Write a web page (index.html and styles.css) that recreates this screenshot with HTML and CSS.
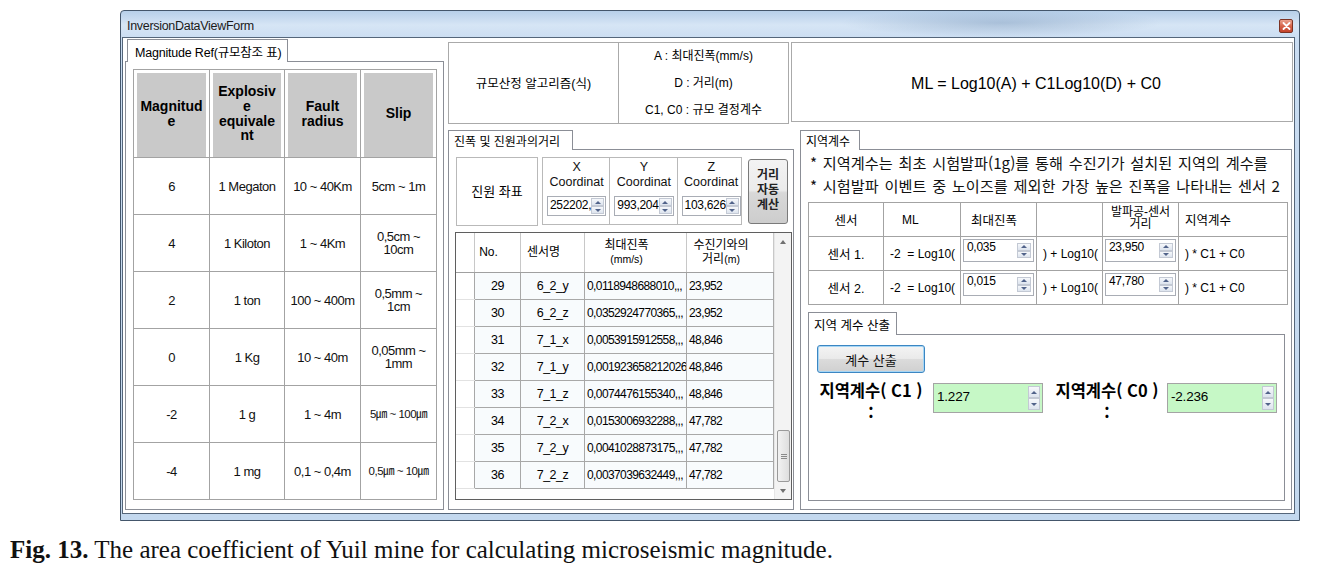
FILE: index.html
```html
<!DOCTYPE html>
<html lang="ko">
<head>
<meta charset="utf-8">
<title>InversionDataViewForm</title>
<link rel="stylesheet" href="styles.css">
</head>
<body>
<div class="window">
  <div class="titlebar">
    <span class="title">InversionDataViewForm</span>
    <span class="close"><svg width="9" height="8" viewBox="0 0 9 8"><path d="M1.5 1 L7.5 7 M7.5 1 L1.5 7" stroke="#fff" stroke-width="1.8" stroke-linecap="round"/></svg></span>
  </div>
  <div class="client">
    <section class="tabctl ref-ctl">
      <div class="tabstrip"><div class="tab">Magnitude Ref(규모참조 표)</div></div>
      <div class="tabpage ref-page">
        <table class="ref">
          <colgroup><col class="w76"><col class="w75"><col class="w76"><col class="w76"></colgroup>
          <thead>
            <tr><th>Magnitud<br>e</th><th>Explosiv<br>e<br>equivale<br>nt</th><th>Fault<br>radius</th><th>Slip</th></tr>
          </thead>
          <tbody>
            <tr><td>6</td><td>1 Megaton</td><td>10 ~ 40Km</td><td>5cm ~ 1m</td></tr>
            <tr><td>4</td><td>1 Kiloton</td><td>1 ~ 4Km</td><td>0,5cm ~<br>10cm</td></tr>
            <tr><td>2</td><td>1 ton</td><td>100 ~ 400m</td><td>0,5mm ~<br>1cm</td></tr>
            <tr><td>0</td><td>1 Kg</td><td>10 ~ 40m</td><td>0,05mm ~<br>1mm</td></tr>
            <tr><td>-2</td><td>1 g</td><td>1 ~ 4m</td><td class="mu">5㎛ ~ 100㎛</td></tr>
            <tr><td>-4</td><td>1 mg</td><td>0,1 ~ 0,4m</td><td class="mu">0,5㎛ ~ 10㎛</td></tr>
          </tbody>
        </table>
      </div>
    </section>

    <div class="main">
      <div class="top-row">
        <div class="algo">
          <div class="algo-name">규모산정 알고리즘(식)</div>
          <div class="algo-vars">
            <p>A : 최대진폭(mm/s)</p>
            <p>D : 거리(m)</p>
            <p>C1, C0 : 규모 결정계수</p>
          </div>
        </div>
        <div class="formula">ML = Log10(A) + C1Log10(D) + C0</div>
      </div>

      <div class="bottom-row">
        <section class="tabctl dist-ctl">
          <div class="tabstrip"><div class="tab">진폭 및 진원과의거리</div></div>
          <div class="tabpage dist-page">
            <div class="coords">
              <div class="origin">진원 좌표</div>
              <div class="xyz">
                <div class="axis">
                  <div class="axis-label">X<br>Coordinat</div>
                  <div class="spin"><span class="val">252202,</span><span class="btns"><i class="up"></i><i class="dn"></i></span></div>
                </div>
                <div class="axis">
                  <div class="axis-label">Y<br>Coordinat</div>
                  <div class="spin"><span class="val">993,204</span><span class="btns"><i class="up"></i><i class="dn"></i></span></div>
                </div>
                <div class="axis">
                  <div class="axis-label">Z<br>Coordinat</div>
                  <div class="spin"><span class="val">103,626</span><span class="btns"><i class="up"></i><i class="dn"></i></span></div>
                </div>
              </div>
              <button class="auto-btn">거리<br>자동<br>계산</button>
            </div>

            <div class="grid">
              <table class="dg">
                <colgroup><col class="g-rh"><col class="g-no"><col class="g-name"><col class="g-amp"><col class="g-dist"></colgroup>
                <thead>
                  <tr><th></th><th>No.</th><th>센서명</th><th>최대진폭<br><small>(mm/s)</small></th><th>수진기와의<br>거리<small>(m)</small></th></tr>
                </thead>
                <tbody>
                  <tr><td></td><td>29</td><td>6_2_y</td><td class="l">0,0118948688010,,,</td><td class="l">23,952</td></tr>
                  <tr><td></td><td>30</td><td>6_2_z</td><td class="l">0,0352924770365,,,</td><td class="l">23,952</td></tr>
                  <tr><td></td><td>31</td><td>7_1_x</td><td class="l">0,0053915912558,,,</td><td class="l">48,846</td></tr>
                  <tr><td></td><td>32</td><td>7_1_y</td><td class="l">0,001923658212026</td><td class="l">48,846</td></tr>
                  <tr><td></td><td>33</td><td>7_1_z</td><td class="l">0,0074476155340,,,</td><td class="l">48,846</td></tr>
                  <tr><td></td><td>34</td><td>7_2_x</td><td class="l">0,0153006932288,,,</td><td class="l">47,782</td></tr>
                  <tr><td></td><td>35</td><td>7_2_y</td><td class="l">0,0041028873175,,,</td><td class="l">47,782</td></tr>
                  <tr><td></td><td>36</td><td>7_2_z</td><td class="l">0,0037039632449,,,</td><td class="l">47,782</td></tr>
                </tbody>
              </table>
              <div class="vscroll">
                <span class="sarrow sup"></span>
                <span class="track"><span class="thumb"><i></i><i></i><i></i></span></span>
                <span class="sarrow sdn"></span>
              </div>
            </div>
          </div>
        </section>

        <section class="tabctl region-ctl">
          <div class="tabstrip"><div class="tab">지역계수</div></div>
          <div class="tabpage region-page">
            <p class="note">* 지역계수는 최초 시험발파(1g)를 통해 수진기가 설치된 지역의 계수를</p>
            <p class="note">* 시험발파 이벤트 중 노이즈를 제외한 가장 높은 진폭을 나타내는 센서 2</p>
            <table class="coef">
              <colgroup><col class="k1"><col class="k2"><col class="k3"><col class="k4"><col class="k5"><col class="k6"></colgroup>
              <thead>
                <tr><th>센서</th><th class="lft ml">ML</th><th class="lft amp">최대진폭</th><th></th><th class="two">발파공-센서<br>거리</th><th class="lft">지역계수</th></tr>
              </thead>
              <tbody>
                <tr>
                  <td class="ctr">센서 1.</td><td>-2&nbsp; = Log10(</td>
                  <td class="box"><div class="spin small"><span class="val">0,035</span><span class="btns"><i class="up"></i><i class="dn"></i></span></div></td>
                  <td>) + Log10(</td>
                  <td class="box"><div class="spin small"><span class="val">23,950</span><span class="btns"><i class="up"></i><i class="dn"></i></span></div></td>
                  <td>) * C1 + C0</td>
                </tr>
                <tr>
                  <td class="ctr">센서 2.</td><td>-2&nbsp; = Log10(</td>
                  <td class="box"><div class="spin small"><span class="val">0,015</span><span class="btns"><i class="up"></i><i class="dn"></i></span></div></td>
                  <td>) + Log10(</td>
                  <td class="box"><div class="spin small"><span class="val">47,780</span><span class="btns"><i class="up"></i><i class="dn"></i></span></div></td>
                  <td>) * C1 + C0</td>
                </tr>
              </tbody>
            </table>

            <section class="tabctl calc-ctl">
              <div class="tabstrip"><div class="tab">지역 계수 산출</div></div>
              <div class="tabpage calc-page">
                <button class="calc-btn">계수 산출</button>
                <div class="result-row">
                  <div class="res-label">지역계수( C1 )<br>:</div>
                  <div class="spin green"><span class="val">1.227</span><span class="btns"><i class="up"></i><i class="dn"></i></span></div>
                  <div class="res-label second">지역계수( C0 )<br>:</div>
                  <div class="spin green last"><span class="val">-2.236</span><span class="btns"><i class="up"></i><i class="dn"></i></span></div>
                </div>
              </div>
            </section>
          </div>
        </section>
      </div>
    </div>
  </div>
</div>
<p class="caption"><b>Fig. 13.</b> The area coefficient of Yuil mine for calculating microseismic magnitude.</p>
</body>
</html>
```

FILE: styles.css
```css
* { box-sizing: border-box; }
html, body { margin: 0; padding: 0; }
body {
  width: 1320px; height: 567px; overflow: hidden; background: #fff; color: #000;
  font-family: "Liberation Sans", "Noto Sans CJK KR", sans-serif;
  font-size: 12px;
}
p { margin: 0; }
table { border-collapse: collapse; table-layout: fixed; }
th, td { padding: 0; }

/* ---------- window frame ---------- */
.window {
  width: 1180px; height: 511px; margin: 10px 0 0 120px;
  border: 1px solid #44566b; border-radius: 4px 4px 0 0;
  background:
    radial-gradient(ellipse 160px 14px at 880px 12px, rgba(120,150,185,0.45), rgba(120,150,185,0) 100%),
    linear-gradient(180deg, #b7cfe9 0px, #d6e5f5 14px, #c9dcf1 30px, #c3d8ee 100%);
  padding: 0 4px 6px 1px;
  display: flex; flex-direction: column;
}
.titlebar { height: 26px; display: flex; align-items: center; padding: 3px 0 0 5px; }
.title { font-size: 12.5px; letter-spacing: -0.3px; color: #1b1b1b; }
.close {
  margin-left: auto; margin-right: 2px; width: 14px; height: 14px;
  border: 1px solid #7c3324; border-radius: 2px;
  background: linear-gradient(180deg, #eaa38f 0%, #d7654b 50%, #c4432b 100%);
  display: flex; align-items: center; justify-content: center;
}
.client {
  flex: 1; display: flex; background: #fff;
  border: 1px solid #55667a;
}

/* ---------- generic tab control ---------- */
.tabctl { display: flex; flex-direction: column; }
.tabstrip { display: flex; }
.tabstrip::after { content: ""; flex: 1; border-bottom: 1px solid #8b8e96; }
.tab {
  border: 1px solid #8b8e96; border-bottom: none; background: #fff;
  font-size: 12px; white-space: nowrap; display: flex; align-items: center; padding: 0 6px;
}
.tabpage { flex: 1; border: 1px solid #8b8e96; border-top: none; background: #fff; }

/* ---------- left: magnitude reference ---------- */
.ref-ctl { width: 319px; margin: 1px 0 0 2px; height: 471px; }
.ref-ctl .tabstrip::before { content: ""; width: 2px; border-bottom: 1px solid #8b8e96; }
.ref-ctl .tab { width: 161px; height: 23px; padding-left: 7px; font-size: 12.5px; letter-spacing: -0.2px; }
.ref-page { padding: 7px 0 0 7px; }
.ref { width: 303px; border: 1px solid #a3a3a3; }
.ref .w76 { width: 76px; }
.ref .w75 { width: 75px; }
.ref th {
  height: 88px; background: #c9c9c9; font-weight: bold; font-size: 14px; line-height: 14.6px;
  border: 1px solid #a3a3a3; text-align: center;
  box-shadow: inset 3px 3px 0 #fff, inset -3px 0 0 #fff;
}
.ref td {
  height: 57px; border: 1px solid #a3a3a3; text-align: center; font-size: 13px; line-height: 13px;
  letter-spacing: -0.5px; color: #111; white-space: nowrap;
}
.ref td.mu { letter-spacing: -0.5px; font-size: 11.5px; }

/* ---------- main (right of left column) ---------- */
.main { width: 846px; margin: 4px 0 0 4px; display: flex; flex-direction: column; }
.top-row { display: flex; height: 82px; }
.algo { width: 341px; display: flex; border: 1px solid #aaaaaa; }
.algo-name {
  width: 170px; border-right: 1px solid #aaaaaa; display: flex; align-items: center; justify-content: center;
  font-size: 12.5px; padding-bottom: 2px;
}
.algo-vars { flex: 1; text-align: center; font-size: 12px; line-height: 27px; }
.formula {
  width: 502px; height: 80px; margin-left: 2px; border: 1px solid #aaaaaa;
  display: flex; align-items: center; justify-content: center; font-size: 16px; padding: 3px 12px 0 0;
}
.bottom-row { display: flex; margin-top: 6px; height: 380px; }

/* ---------- distance tab ---------- */
.dist-ctl { width: 346px; }
.dist-ctl .tab { width: 125px; height: 20px; font-size: 12px; padding: 0 5px; }
.dist-page { padding: 7px 0 0 6px; }
.coords { display: flex; margin-left: 1px; height: 70px; }
.origin {
  width: 82px; height: 69px; border: 1px solid #b9b9b9; display: flex; align-items: center; justify-content: center;
  font-size: 13px; padding-bottom: 2px;
}
.xyz { width: 200px; height: 68px; margin-left: 4px; border: 1px solid #b9b9b9; display: flex; }
.axis { flex: 1; padding: 0 3px 0 4px; }
.axis + .axis { border-left: 1px solid #b9b9b9; }
.axis-label { text-align: center; font-size: 12.5px; line-height: 15px; padding-top: 2px; height: 38px; color: #111; }
.axis .spin { height: 20px; }

.spin { display: flex; border: 1px solid #a9adb5; background: #fff; }
.spin .val { flex: 1; font-size: 12px; letter-spacing: -0.3px; line-height: 17px; padding-left: 2px; white-space: nowrap; overflow: hidden; }
.spin .btns { width: 14px; display: flex; flex-direction: column; padding: 1px 1px 1px 0; }
.spin .btns i {
  flex: 1; border: 1px solid #c3c9d4; background: linear-gradient(180deg, #f6f8fb, #dde4ee);
  display: flex; align-items: center; justify-content: center;
}
.spin .btns i::after { content: ""; border-left: 3px solid transparent; border-right: 3px solid transparent; }
.spin .btns .up::after { border-bottom: 3px solid #51638a; }
.spin .btns .dn::after { border-top: 3px solid #51638a; }

.auto-btn {
  width: 40px; height: 65px; margin: 2px 0 0 6px; padding: 0 0 6px;
  border: 1px solid #7a7a7a; border-radius: 3px;
  background: linear-gradient(180deg, #f3f3f3 0%, #ebebeb 48%, #d8d8d8 52%, #cdcdcd 100%);
  font-family: "Noto Sans CJK KR", sans-serif; font-size: 12px; font-weight: bold; line-height: 15px; color: #222;
}

.grid {
  width: 337px; height: 268px; margin-top: 5px; display: flex; align-items: flex-start;
  border: 1px solid #5f5f5f; background: #fff;
}
.dg { width: 317px; }
.dg .g-rh { width: 18px; }
.dg .g-no { width: 46px; }
.dg .g-name { width: 64px; }
.dg .g-amp { width: 102px; }
.dg .g-dist { width: 87px; }
.dg th {
  height: 39px; font-weight: normal; font-size: 12px; line-height: 14px; text-align: center; padding-right: 18px;
  border-right: 1px solid #c8c8c8; border-bottom: 1px solid #a0a0a0; vertical-align: middle; background: #fff;
}
.dg th small { font-size: 10.5px; }
.dg th:first-child { padding: 0; }
.dg td {
  height: 27px; border: 1px solid #a8a8a8; text-align: center; font-size: 12.5px; letter-spacing: -0.5px;
  background: #f8fbfd; white-space: nowrap; overflow: hidden;
}
.dg td:first-child { border-color: #e2e2e2 #a8a8a8 #e2e2e2 transparent; background: #fff; }
.dg td.l { text-align: left; padding-left: 2px; font-size: 12px; letter-spacing: -0.6px; }
.vscroll { width: 18px; align-self: stretch; display: flex; flex-direction: column; background: #f3f3f3; border-left: 1px solid #e6e6e6; }
.sarrow { height: 17px; display: flex; align-items: center; justify-content: center; }
.sarrow::after { content: ""; border-left: 3px solid transparent; border-right: 3px solid transparent; }
.sup::after { border-bottom: 4px solid #707070; }
.sdn::after { border-top: 4px solid #707070; }
.track { flex: 1; display: flex; flex-direction: column; }
.thumb {
  margin: auto 1px 0 2px; height: 52px; border: 1px solid #9a9a9a; border-radius: 2px;
  background: linear-gradient(90deg, #f2f2f2, #dedede);
  display: flex; flex-direction: column; align-items: center; justify-content: center; gap: 1px;
}
.thumb i { width: 6px; height: 1px; background: #8a8a8a; }

/* ---------- region coefficient tab ---------- */
.region-ctl { width: 492px; margin-left: 6px; }
.region-ctl .tab { width: 60px; height: 20px; font-size: 12px; padding: 0 5px; }
.region-page { padding: 1px 0 0 7px; overflow: hidden; }
.note {
  font-family: "Noto Sans CJK KR", sans-serif; font-size: 15.2px; line-height: 23px; word-spacing: 1.5px;
  white-space: nowrap; width: 482px; overflow: hidden; padding-left: 2px; color: #111;
}
.coef { width: 479px; margin-top: 5px; border: 1px solid #a3a3a3; }
.coef .k1 { width: 75px; }
.coef .k2 { width: 77px; }
.coef .k3 { width: 76px; }
.coef .k4 { width: 66px; }
.coef .k5 { width: 76px; }
.coef .k6 { width: 109px; }
.coef th {
  height: 34px; border: 1px solid #a3a3a3; font-weight: normal; font-size: 12.5px; text-align: center;
}
.coef th.lft { text-align: left; padding-left: 6px; }
.coef th.ml { padding-left: 18px; font-size: 12px; }
.coef th.amp { padding-left: 10px; }
.coef th.two { vertical-align: top; padding-top: 3px; line-height: 12px; font-size: 12px; }
.coef td { height: 34px; border: 1px solid #a3a3a3; font-size: 12px; padding-left: 6px; white-space: nowrap; }
.coef td.ctr { text-align: center; font-size: 12.5px; padding-left: 0; }
.coef td.box { vertical-align: top; padding: 2px 0 0 2px; }
.spin.small { width: 71px; height: 23px; }
.spin.small .val { padding-left: 3px; line-height: 15px; }
.spin.small .btns { padding: 3px 2px 3px 0; width: 16px; }

.calc-ctl { width: 477px; height: 189px; margin-top: 7px; }
.calc-ctl .tab { width: 89px; height: 23px; font-size: 12.5px; padding: 0 5px; }
.calc-page { padding: 10px 0 0 8px; }
.calc-btn {
  display: block; width: 108px; height: 28px; margin: 0; padding: 0;
  border: 1px solid #3c86c2; border-radius: 3px; box-shadow: inset 0 0 0 1px #a6d6f5;
  background: linear-gradient(180deg, #f4f4f4 0%, #eaeaea 48%, #dbdbdb 52%, #d0d0d0 100%);
  font-family: "Noto Sans CJK KR", sans-serif; font-size: 13px; color: #111;
}
.result-row { display: flex; align-items: flex-start; margin-top: 10px; }
.res-label {
  width: 108px; text-align: center; font-family: "Noto Sans CJK KR", sans-serif; font-weight: bold;
  font-size: 16.5px; line-height: 22px; margin-top: -4px; white-space: nowrap;
}
.res-label.second { margin-left: 10px; }
.spin.green { width: 110px; height: 30px; margin-left: 8px; background: #c6f8c6; border-color: #a4a4a4; }
.spin.green.last { margin-left: 6px; }
.spin.green .val { font-size: 13.5px; letter-spacing: -0.2px; line-height: 26px; padding-left: 3px; background: #c6f8c6; }
.spin.green .btns { width: 14px; padding: 2px 2px 2px 0; background: #c6f8c6; }

/* ---------- caption ---------- */
.caption {
  margin: 15px 0 0 10px; font-family: "Liberation Serif", "Times New Roman", serif; font-size: 25px;
  white-space: nowrap; color: #111;
}
```
